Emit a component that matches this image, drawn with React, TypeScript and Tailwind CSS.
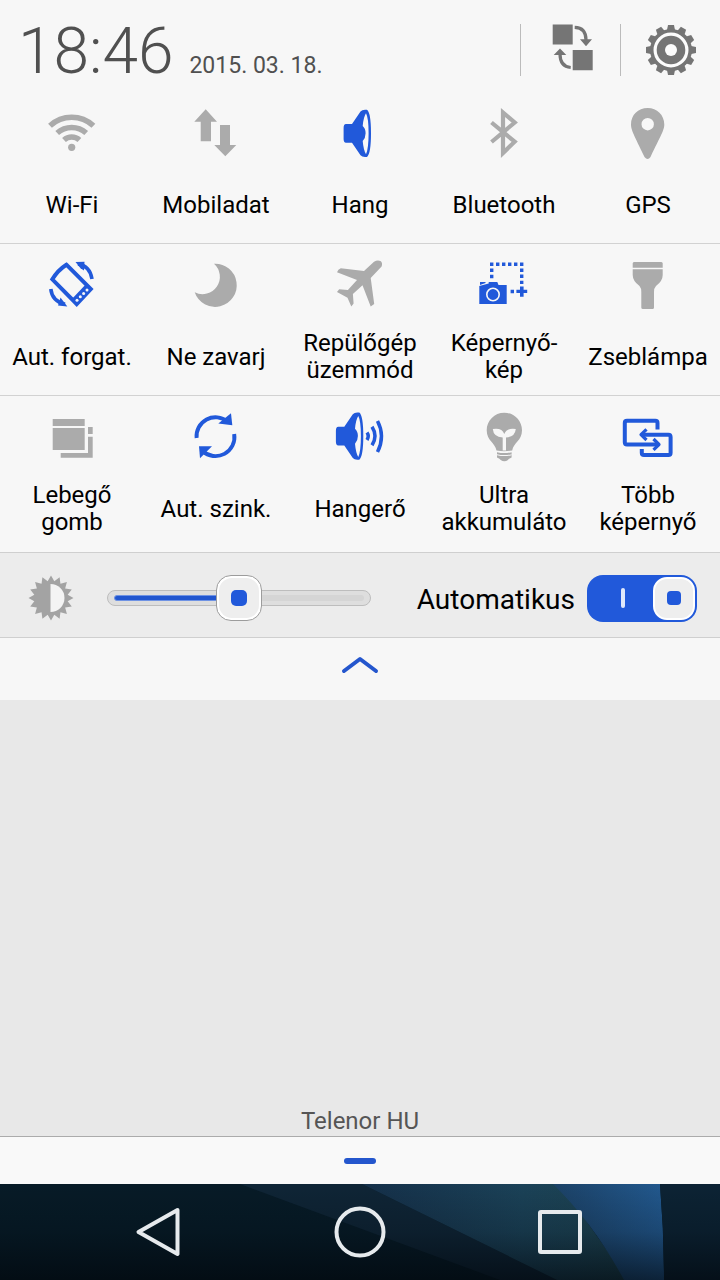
import { useState, type ReactNode } from 'react';
import { clsx } from 'clsx';

function Icon({ children }: { children: ReactNode }) {
  return (
    <svg viewBox="0 0 56 56" className="h-14 w-14" fill="currentColor" aria-hidden="true">
      {children}
    </svg>
  );
}

function Speaker() {
  return (
    <>
      <path d="M14 19H20L28.5 6.5Q30 4.8 33 4.8H35Q39 8 39 28.3T35 51.9H33Q30 51.9 28.5 50.2L20 37.7H14Q11.6 37.7 11.6 34V23Q11.6 19 14 19Z" />
      <path
        d="M34 8.3Q36.6 13 36.6 28.3T34 49.3Q31.5 45 30.7 36Q33.6 33 33.6 28.3T30.7 21Q31.5 12 34 8.3Z"
        fill="#f7f7f7"
      />
    </>
  );
}

const icons = {
  wifi: (
    <Icon>
      <g fill="none" stroke="currentColor" strokeWidth="5.6">
        <path d="M6 20.7A32 32 0 0 1 49.4 20.7" />
        <path d="M13.2 28A22 22 0 0 1 42.2 28" />
        <path d="M20 35A11.5 11.5 0 0 1 35.4 35" />
      </g>
      <circle cx="27.7" cy="42.3" r="3.6" />
    </Icon>
  ),
  data: (
    <Icon>
      <path d="M17.7 4.3L29 16.7H23V36.3H12.7V16.7H6.3Z" />
      <path d="M32 20H42V40H48.3L37.3 51.3L26.3 40H32Z" />
    </Icon>
  ),
  sound: (
    <Icon>
      <Speaker />
    </Icon>
  ),
  bluetooth: (
    <Icon>
      <path
        d="M15.5 17.5L38.7 36.7L27 48V7.5L38.7 17.5L15.5 37"
        fill="none"
        stroke="currentColor"
        strokeWidth="4.2"
      />
    </Icon>
  ),
  gps: (
    <Icon>
      <path
        fillRule="evenodd"
        d="M27.7 3C18 3 11 10 11 19.5C11 25 14 30 24.5 52Q27.7 56 30.5 52C41 30 44.3 25 44.3 19.5C44.3 10 37 3 27.7 3ZM27.7 13A6.2 6.2 0 1 1 27.7 25.4A6.2 6.2 0 1 1 27.7 13Z"
      />
    </Icon>
  ),
  rotate: (
    <Icon>
      <path
        d="M22.4 7.7L46.8 32L32.7 47L8.3 22.3Q14 13 22.4 7.7Z"
        fill="none"
        stroke="currentColor"
        strokeWidth="4"
      />
      <path d="M42.6 26.4L48 32L32.7 48L27.4 42.6Z" />
      <g fill="#f7f7f7">
        <circle cx="33" cy="43.2" r="1.5" />
        <circle cx="36.3" cy="39.8" r="1.5" />
        <circle cx="39.6" cy="36.4" r="1.5" />
        <circle cx="43" cy="33" r="1.5" />
      </g>
      <g fill="none" stroke="currentColor" strokeWidth="3.6">
        <path d="M34 7Q46 9 48 22" />
        <path d="M6.8 32Q8 44 21 47.3" />
      </g>
      <path d="M31.5 5L40.5 4.8L40 13.5L36.5 11.2Z" />
      <path d="M16.5 40.5L23.3 49.4L14 48.5Z" />
    </Icon>
  ),
  moon: (
    <Icon>
      <path d="M26 6.7A21.6 21.6 0 1 1 6.7 35.3A17.4 17.4 0 0 0 26 6.7Z" />
    </Icon>
  ),
  plane: (
    <Icon>
      <path d="M42 4.7Q45.5 2.5 48.5 4Q51 6 49.6 9.5L38.7 21L42.2 47L38.7 49.5L30.5 28.3L20.9 37L21.6 46.5L19.3 49.5L15.5 40.8L5 35L7.2 32.2L15.9 33L25 23L5 15.3Q6 12 8.8 11.2L32 14Z" />
    </Icon>
  ),
  screenshot: (
    <Icon>
      <path d="M14 5.5h3.4v3.4h-3.4zM20 5.5h3.4v3.4h-3.4zM26 5.5h3.4v3.4h-3.4zM32 5.5h3.4v3.4h-3.4zM38 5.5h3.4v3.4h-3.4zM44 5.5h3.4v3.4h-3.4zM14 11.5h3.4v3.4h-3.4zM14 17.8h3.4v3.4h-3.4zM44 11.5h3.4v3.4h-3.4zM44 17.5h3.4v3.4h-3.4zM44 23.7h3.4v3.4h-3.4zM34.6 32.8h3.4v3.4h-3.4z" />
      <path d="M44 29.5h3.6v3.2h3.6v3.4h-3.6v3.7h-3.6v-3.7h-3.6v-3.4h3.6z" />
      <path d="M3.3 29L12.7 26.5V25H21.3L22.5 28H30.7V47H3.3Z" />
      <path d="M4 25H9.5V26L4 28Z" />
      <circle cx="17" cy="37.5" r="6.2" fill="none" stroke="#f7f7f7" strokeWidth="1.6" />
    </Icon>
  ),
  torch: (
    <Icon>
      <path d="M14 5H41.3Q42.7 5 42.7 6.5V10.7H12.7V6.5Q12.7 5 14 5Z" />
      <path d="M12.7 12.2H42.7V18Q42.7 24 36 29Q34 31 34 35V50.5Q34 52 32.5 52H23Q21.3 52 21.3 50.5V35Q21.3 31 19.5 29Q12.7 24 12.7 18Z" />
    </Icon>
  ),
  floating: (
    <Icon>
      <path d="M8.7 10H40.7V17H8.7ZM8.7 19H40.7V41H8.7ZM44 18H48.7V25H44ZM44 27.7H48.7V48.7H16.7V44H44Z" />
    </Icon>
  ),
  sync: (
    <Icon>
      <g fill="none" stroke="currentColor" strokeWidth="3.9">
        <path d="M8.6 29A19 19 0 0 1 39.5 12.5" />
        <path d="M46.2 25A19 19 0 0 1 14.5 42" />
      </g>
      <path d="M43 4.3L44.3 16.3L30.3 14.5Z" />
      <path d="M24 37.3H11L12 49.3Z" />
    </Icon>
  ),
  volume: (
    <Icon>
      <g transform="translate(-7.7 -1.2)">
        <Speaker />
      </g>
      <g fill="none" stroke="currentColor" strokeWidth="3.5">
        <path d="M35 23.5Q37.5 27 35 31" />
        <path d="M40 17.7Q46 27 40 36.3" />
        <path d="M45.5 12Q53.5 27 45.5 43" />
      </g>
    </Icon>
  ),
  bulb: (
    <Icon>
      <path d="M28.3 3.7C18.5 3.7 10.7 11.5 10.7 21.3C10.7 32 19 33.5 20.5 41.5Q28.3 43 36.2 41.5C37.6 33.5 46 32 46 21.3C46 11.5 38 3.7 28.3 3.7Z" />
      <path d="M21 43.2Q28.3 45 35.6 43.2V48.5Q32.5 49.5 32 51Q28.3 53.5 24.7 51Q24 49.5 21 48.5Z" />
      <g fill="#f7f7f7">
        <path d="M26.7 41.5V28.5Q17.5 28 16.8 20Q26 18.5 28.3 25Q30.5 18.5 39.8 20Q39 28 30 28.5V41.5Z" />
        <path d="M21 45.2Q28.3 47 35.6 45.2V46.2Q28.3 48 21 46.2Z" />
      </g>
    </Icon>
  ),
  multi: (
    <Icon>
      <g fill="none" stroke="currentColor" strokeWidth="4" strokeLinejoin="round">
        <path d="M37.5 20.5V14Q37.5 11.8 35.3 11.8H7Q4.8 11.8 4.8 14V33.3Q4.8 35.5 7 35.5H38" />
        <path d="M22 25.7H48.4Q50.6 25.7 50.6 28V43.7Q50.6 46 48.4 46H24Q21.8 46 21.8 43.7V40" />
        <path d="M26.5 20.3L21 25.7L26.5 31" strokeWidth="3.2" />
        <path d="M33.5 30L39 35.5L33.5 40.8" strokeWidth="3.2" />
      </g>
    </Icon>
  )
};

type Tile = { icon: keyof typeof icons; label: string; on?: boolean };

const rows: Tile[][] = [
  [
    { icon: 'wifi', label: 'Wi-Fi' },
    { icon: 'data', label: 'Mobiladat' },
    { icon: 'sound', label: 'Hang', on: true },
    { icon: 'bluetooth', label: 'Bluetooth' },
    { icon: 'gps', label: 'GPS' }
  ],
  [
    { icon: 'rotate', label: 'Aut. forgat.', on: true },
    { icon: 'moon', label: 'Ne zavarj' },
    { icon: 'plane', label: 'Repülőgép\nüzemmód' },
    { icon: 'screenshot', label: 'Képernyő-\nkép', on: true },
    { icon: 'torch', label: 'Zseblámpa' }
  ],
  [
    { icon: 'floating', label: 'Lebegő\ngomb' },
    { icon: 'sync', label: 'Aut. szink.', on: true },
    { icon: 'volume', label: 'Hangerő', on: true },
    { icon: 'bulb', label: 'Ultra\nakkumuláto' },
    { icon: 'multi', label: 'Több\nképernyő', on: true }
  ]
];

function Header() {
  return (
    <header className="flex h-[92px] items-start text-[#505050]">
      <div className="flex flex-1 items-baseline gap-4 pl-[18px] pt-[14px]">
        <time className="text-[64px] leading-[76px] font-light">18:46</time>
        <span className="text-[23px]">2015. 03. 18.</span>
      </div>
      <button
        aria-label="Szerkesztés"
        className="mt-6 flex h-[52px] w-[100px] items-center justify-center border-l border-[#bbbbbb] text-[#757575]"
      >
        <svg viewBox="0 0 52 52" className="h-[52px] w-[52px]" fill="currentColor">
          <path d="M7.7 .4H27.7V20.6H7.7ZM27.7 26H47.7V46.2H27.7Z" />
          <path d="M29.7 3.3Q41 3.5 41 16M25.7 43.5Q15 42.5 15 30" fill="none" stroke="currentColor" strokeWidth="3.2" />
          <path d="M35 15.3H47L41 22.2ZM8.7 31H21.3L15 24.5Z" />
        </svg>
      </button>
      <button
        aria-label="Beállítások"
        className="mt-6 flex h-[52px] w-[100px] items-center justify-center border-l border-[#bbbbbb] text-[#757575]"
      >
        <svg viewBox="0 0 52 52" className="h-[52px] w-[52px]" fill="currentColor">
          {Array.from({ length: 12 }, (_, i) => (
            <path key={i} d="M23 1H29L30.2 7H21.8Z" transform={`rotate(${i * 30} 26 26)`} />
          ))}
          <circle cx="26" cy="26" r="21" />
          <circle cx="26" cy="26" r="15.9" fill="none" stroke="#fcfcfc" strokeWidth="3.2" />
          <circle cx="26" cy="26" r="6" fill="#fcfcfc" />
        </svg>
      </button>
    </header>
  );
}

function Toggle({ tile }: { tile: Tile }) {
  const [on, setOn] = useState(!!tile.on);

  return (
    <button
      aria-pressed={on}
      onClick={() => setOn(!on)}
      className="flex flex-col items-center gap-[17px] pt-[13px]"
    >
      <span className={on ? 'text-[#2159da]' : 'text-[#ababab]'}>{icons[tile.icon]}</span>
      <span className="flex h-[54px] items-center text-2xl leading-[27px] whitespace-pre text-black">
        {tile.label}
      </span>
    </button>
  );
}

const sunPoints = Array.from({ length: 32 }, (_, i) => {
  const r = i % 2 ? 17 : 22.5;
  const a = (i * Math.PI) / 16 - Math.PI / 2;
  return `${23 + r * Math.cos(a)},${23 + r * Math.sin(a)}`;
}).join(' ');

function Brightness() {
  const [level, setLevel] = useState(50);
  const [auto, setAuto] = useState(true);

  return (
    <section className="flex h-[85px] items-center border-b border-[#cfcfcf] bg-[#ececec] pt-[6px] pr-[23px] pl-7">
      <svg viewBox="0 0 46 46" className="mr-[33px] h-[46px] w-[46px] shrink-0" fill="#a3a3a3">
        <polygon points={sunPoints} />
        <path d="M22.5 9A14 14 0 0 1 22.5 37Z" fill="#f4f4f4" />
      </svg>
      <div className="relative flex h-[46px] flex-1 items-center">
        <div className="flex h-4 w-full items-center rounded-full border border-[#bdbdbd] bg-[#dedede] px-[6px]">
          <div className="h-[6px] w-full rounded-full bg-[#d5d5d5]">
            <div
              className="h-full rounded-full border border-[#6f93e4] bg-[#2156cf]"
              style={{ width: `${level}%` }}
            />
          </div>
        </div>
        <div className="absolute inset-y-0 right-[22px] left-[22px]">
          <div
            className="absolute top-0 flex h-[46px] w-[46px] -translate-x-1/2 items-center justify-center rounded-[15px] border border-[#9c9c9c] bg-white p-[2px]"
            style={{ left: `${level}%` }}
          >
            <div className="flex h-full w-full items-center justify-center rounded-[13px] bg-[#eeeeee]">
              <div className="h-4 w-4 rounded-[5px] bg-[#2159da]" />
            </div>
          </div>
        </div>
        <input
          type="range"
          aria-label="Fényerő"
          value={level}
          onChange={(e) => setLevel(Number(e.target.value))}
          className="absolute inset-0 m-0 h-full w-full cursor-pointer opacity-0"
        />
      </div>
      <label className="ml-[46px] flex items-center gap-3 text-[28px] leading-8 text-black">
        <span className="pt-1">Automatikus</span>
        <span
          className={clsx(
            'relative flex h-[47px] w-[110px] items-center rounded-2xl p-[2px]',
            auto ? 'justify-end bg-[#2159da]' : 'justify-start bg-[#b5b5b5]'
          )}
        >
          {auto && <span className="mr-7 h-5 w-1 rounded-full bg-[#dfe8fb]" />}
          <span className="flex h-[43px] w-[42px] items-center justify-center rounded-[14px] border-2 border-white bg-[#eeeeee]">
            <span className={clsx('h-[14px] w-[14px] rounded', auto ? 'bg-[#2159da]' : 'bg-[#9a9a9a]')} />
          </span>
          <input
            type="checkbox"
            role="switch"
            checked={auto}
            onChange={(e) => setAuto(e.target.checked)}
            className="absolute inset-0 m-0 h-full w-full cursor-pointer opacity-0"
          />
        </span>
      </label>
    </section>
  );
}

function Wallpaper() {
  return (
    <svg
      viewBox="0 0 720 96"
      preserveAspectRatio="none"
      className="absolute inset-0 h-full w-full"
      aria-hidden="true"
    >
      <defs>
        <linearGradient id="beam" x1="0" y1="0" x2="1" y2="0">
          <stop offset="0" stopColor="#15304a" />
          <stop offset="0.6" stopColor="#1b4258" />
          <stop offset="1" stopColor="#1d4350" />
        </linearGradient>
        <linearGradient id="blue" x1="0" y1="0" x2="1" y2="0">
          <stop offset="0" stopColor="#1c4267" />
          <stop offset="1" stopColor="#22598f" />
        </linearGradient>
        <linearGradient id="shade" x1="0" y1="0" x2="0" y2="1">
          <stop offset="0" stopColor="#01050a" stopOpacity="0" />
          <stop offset="0.5" stopColor="#01050a" stopOpacity="0.2" />
          <stop offset="1" stopColor="#01050a" stopOpacity="0.65" />
        </linearGradient>
      </defs>
      <rect width="720" height="96" fill="#071b27" />
      <path d="M240 0H362L557 96H500Z" fill="#0f2536" />
      <path d="M362 0H560L628 96H557Z" fill="url(#beam)" />
      <path d="M553 0H660Q664 48 664 96H624Q594 40 553 0Z" fill="url(#blue)" />
      <path d="M660 0H720V96H664Q664 48 660 0Z" fill="#0c2334" />
      <rect width="720" height="96" fill="url(#shade)" />
    </svg>
  );
}

function NavBar() {
  const shapes = [
    { label: 'Vissza', shape: <path d="M43 6L4 28L43 50Z" transform="translate(2.5 0)" /> },
    { label: 'Kezdőképernyő', shape: <circle cx="28" cy="28" r="23.5" /> },
    { label: 'Legutóbbiak', shape: <rect x="8" y="8" width="40" height="40" rx="1" /> }
  ];

  return (
    <nav className="relative h-24 bg-[#03090e]">
      <Wallpaper />
      <div className="relative flex h-full items-center justify-center">
        {shapes.map(({ label, shape }) => (
          <button key={label} aria-label={label} className="flex w-[200px] justify-center">
            <svg
              viewBox="0 0 56 56"
              className="h-14 w-14"
              fill="none"
              stroke="#e6eaed"
              strokeWidth="4"
              strokeLinejoin="round"
            >
              {shape}
            </svg>
          </button>
        ))}
      </div>
    </nav>
  );
}

export default function App() {
  return (
    <div className="flex min-h-screen flex-col bg-[#e8e8e8] font-['Roboto',sans-serif]">
      <div className="bg-[#f7f7f7]">
        <Header />
        <div className="border-b border-[#cfcfcf] pb-1">
          {rows.map((row, i) => (
            <div
              key={i}
              className={clsx(
                'grid h-[152px] grid-cols-5 border-[#d2d2d2]',
                i < rows.length - 1 && 'border-b'
              )}
            >
              {row.map((tile) => (
                <Toggle key={tile.label} tile={tile} />
              ))}
            </div>
          ))}
        </div>
        <Brightness />
        <button aria-label="Összecsukás" className="flex h-[62px] w-full justify-center pt-4">
          <svg
            viewBox="0 0 40 22"
            className="h-[22px] w-10"
            fill="none"
            stroke="#2456cd"
            strokeWidth="4"
            strokeLinecap="round"
            strokeLinejoin="round"
          >
            <path d="M4 17L20 5L36 17" />
          </svg>
        </button>
      </div>
      <main className="flex flex-1 items-end justify-center">
        <p className="text-2xl leading-[30px] text-[#555555]">Telenor HU</p>
      </main>
      <div className="flex h-12 items-center justify-center border-t border-[#ababab] bg-[#f9f9f9]">
        <button aria-label="Panel bezárása" className="h-[6px] w-8 rounded-sm bg-[#2456cd]" />
      </div>
      <NavBar />
    </div>
  );
}
